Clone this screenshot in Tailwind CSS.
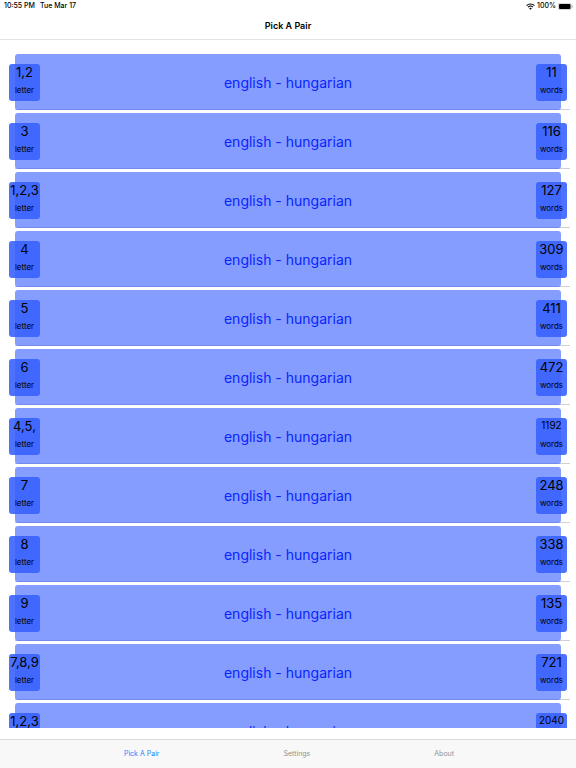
<!DOCTYPE html>
<html lang="en">
<head>
  <meta charset="UTF-8" />
  <meta name="viewport" content="width=device-width, initial-scale=1" />
  <title>Pick A Pair</title>
  <script src="https://cdn.jsdelivr.net/npm/@tailwindcss/browser@4"></script>
</head>
<body class="h-screen flex flex-col bg-white text-black font-['Inter','Liberation_Sans',sans-serif]">
  <!-- Status bar + title -->
  <header class="h-10 shrink-0 border-b border-[#e4e4e4]">
    <div class="h-3 pl-1 pr-[3px] flex items-center justify-between text-[7px] leading-3 font-medium">
      <div class="flex gap-[5px]">
        <span>10:55 PM</span>
        <span>Tue Mar 17</span>
      </div>
      <div class="flex items-center gap-[2px]">
        <svg class="w-[9px] h-[7px]" viewBox="0 0 16 12" fill="none" stroke="#000" stroke-width="2">
          <path d="M1 4.5a10 10 0 0 1 14 0" />
          <path d="M3.7 7.2a6.2 6.2 0 0 1 8.6 0" />
          <path d="M8 11.8 5.6 9.3a3.5 3.5 0 0 1 4.8 0z" fill="#000" stroke="none" />
        </svg>
        <span>100%</span>
        <svg class="w-[15px] h-[7px]" viewBox="0 0 30 14">
          <rect x="0.5" y="0.5" width="26" height="13" rx="3.5" fill="#fff" stroke="#999" />
          <rect x="2" y="2" width="23" height="10" rx="2" fill="#000" />
          <path d="M28 4.5c2 .8 2 4.2 0 5z" fill="#999" />
        </svg>
      </div>
    </div>
    <h1 class="text-center text-[9px] leading-[27px] font-semibold">Pick A Pair</h1>
  </header>

  <!-- Word lists -->
  <main class="flex-1 min-h-0 overflow-hidden my-[11px]">
    <ul id="pairList"></ul>
  </main>

  <!-- Tabs -->
  <nav class="h-[29px] shrink-0 pt-px pl-[2px] border-t border-[#dcdcdc] bg-[#f8f8f8] flex items-center justify-center gap-[124px] text-[7px] text-[#929292]">
    <a href="#pick" class="text-[#1a85ff]">Pick A Pair</a>
    <a href="#settings">Settings</a>
    <a href="#about">About</a>
  </nav>

  <script>
    const pairList = document.getElementById("pairList");

    const pairs = [
      { letters: "1,2", words: 11 },
      { letters: "3", words: 116 },
      { letters: "1,2,3", words: 127 },
      { letters: "4", words: 309 },
      { letters: "5", words: 411 },
      { letters: "6", words: 472 },
      { letters: "4,5,", words: 1192 },
      { letters: "7", words: 248 },
      { letters: "8", words: 338 },
      { letters: "9", words: 135 },
      { letters: "7,8,9", words: 721 },
      { letters: "1,2,3", words: 2040 },
    ];

    pairs.forEach(function (pair) {
      // four digits only fit the badge in a smaller size
      const wordsSize = pair.words > 999 ? "text-[10px] leading-[15px] mb-1" : "text-[13px] leading-[17px] mb-[2px]";
      const row = document.createElement("li");
      row.className = "relative h-[59px] pt-[3px]";
      row.innerHTML = `
        <div class="absolute bottom-0 left-[15px] right-[6px] h-px bg-[#d0d0d4]"></div>
        <button type="button" class="relative block w-[calc(100%-30px)] h-14 mx-auto rounded-[3px] bg-[#335cff]/60 text-[#0a24ff] text-[14px]">english - hungarian</button>
        <div class="absolute left-[9px] top-[13px] w-[31px] h-[37px] rounded-[3px] bg-[#3963ff]/90 text-center whitespace-nowrap">
          <div class="text-[13px] leading-[17px] mb-[2px]">${pair.letters}</div>
          <div class="text-[8px] leading-[15px]">letter</div>
        </div>
        <div class="absolute right-[9px] top-[13px] w-[31px] h-[37px] rounded-[3px] bg-[#3963ff]/90 text-center whitespace-nowrap">
          <div class="${wordsSize}">${pair.words}</div>
          <div class="text-[8px] leading-[15px]">words</div>
        </div>
      `;
      pairList.appendChild(row);
    });
  </script>
</body>
</html>
